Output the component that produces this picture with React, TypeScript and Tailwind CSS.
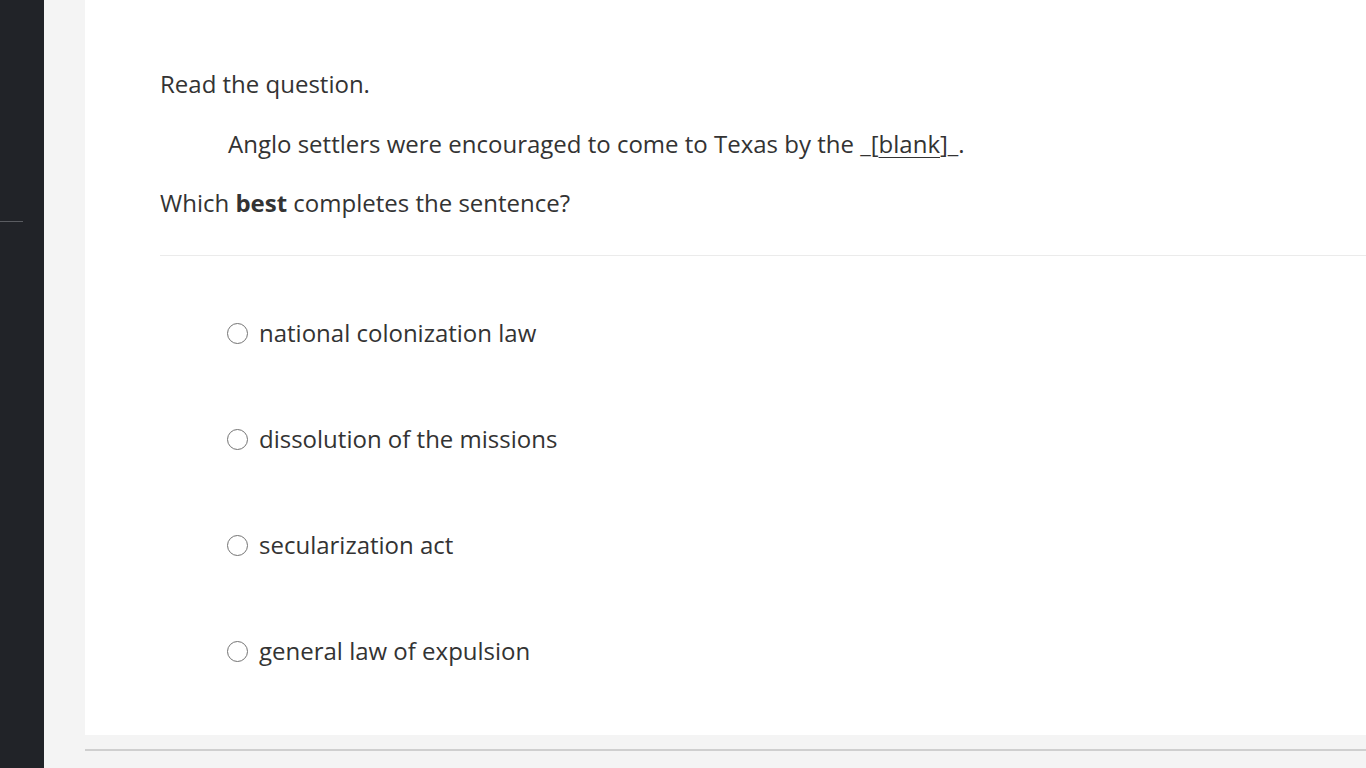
const options = [
  "national colonization law",
  "dissolution of the missions",
  "secularization act",
  "general law of expulsion",
];

export default function App() {
  return (
    <div className="flex h-[768px] w-[1366px] overflow-hidden bg-[#f4f4f4] font-['Open_Sans',sans-serif] text-[#333333]">
      <aside className="w-[44px] shrink-0 bg-[#212328] pt-[221px]">
        <div className="h-px w-[23px] bg-[#5a5c61]" />
      </aside>
      <div className="ml-[41px] flex flex-1 flex-col">
        <main className="h-[735px] bg-white pl-[75px] pt-[67px] text-[24px] leading-[34px]">
          <p>Read the question.</p>
          <p className="ml-[68px] mt-[26px]">
            Anglo settlers were encouraged to come to Texas by the _[
            <span className="underline underline-offset-[4px] decoration-1">blank</span>]_.
          </p>
          <p className="mt-[25px]">
            Which <b className="font-bold">best</b> completes the sentence?
          </p>
          <div className="mt-[35px] h-px bg-[#ebebeb]" />
          <ul className="ml-[67px] mt-[60px] flex flex-col gap-[72px]">
            {options.map((o) => (
              <li key={o} className="flex items-center gap-[11px]">
                <span className="h-[21px] w-[21px] rounded-full border-[1.5px] border-[#737373]" />
                <span>{o}</span>
              </li>
            ))}
          </ul>
        </main>
        <div className="mt-[14px] h-[2px] bg-[#cfcfcf]" />
      </div>
    </div>
  );
}
